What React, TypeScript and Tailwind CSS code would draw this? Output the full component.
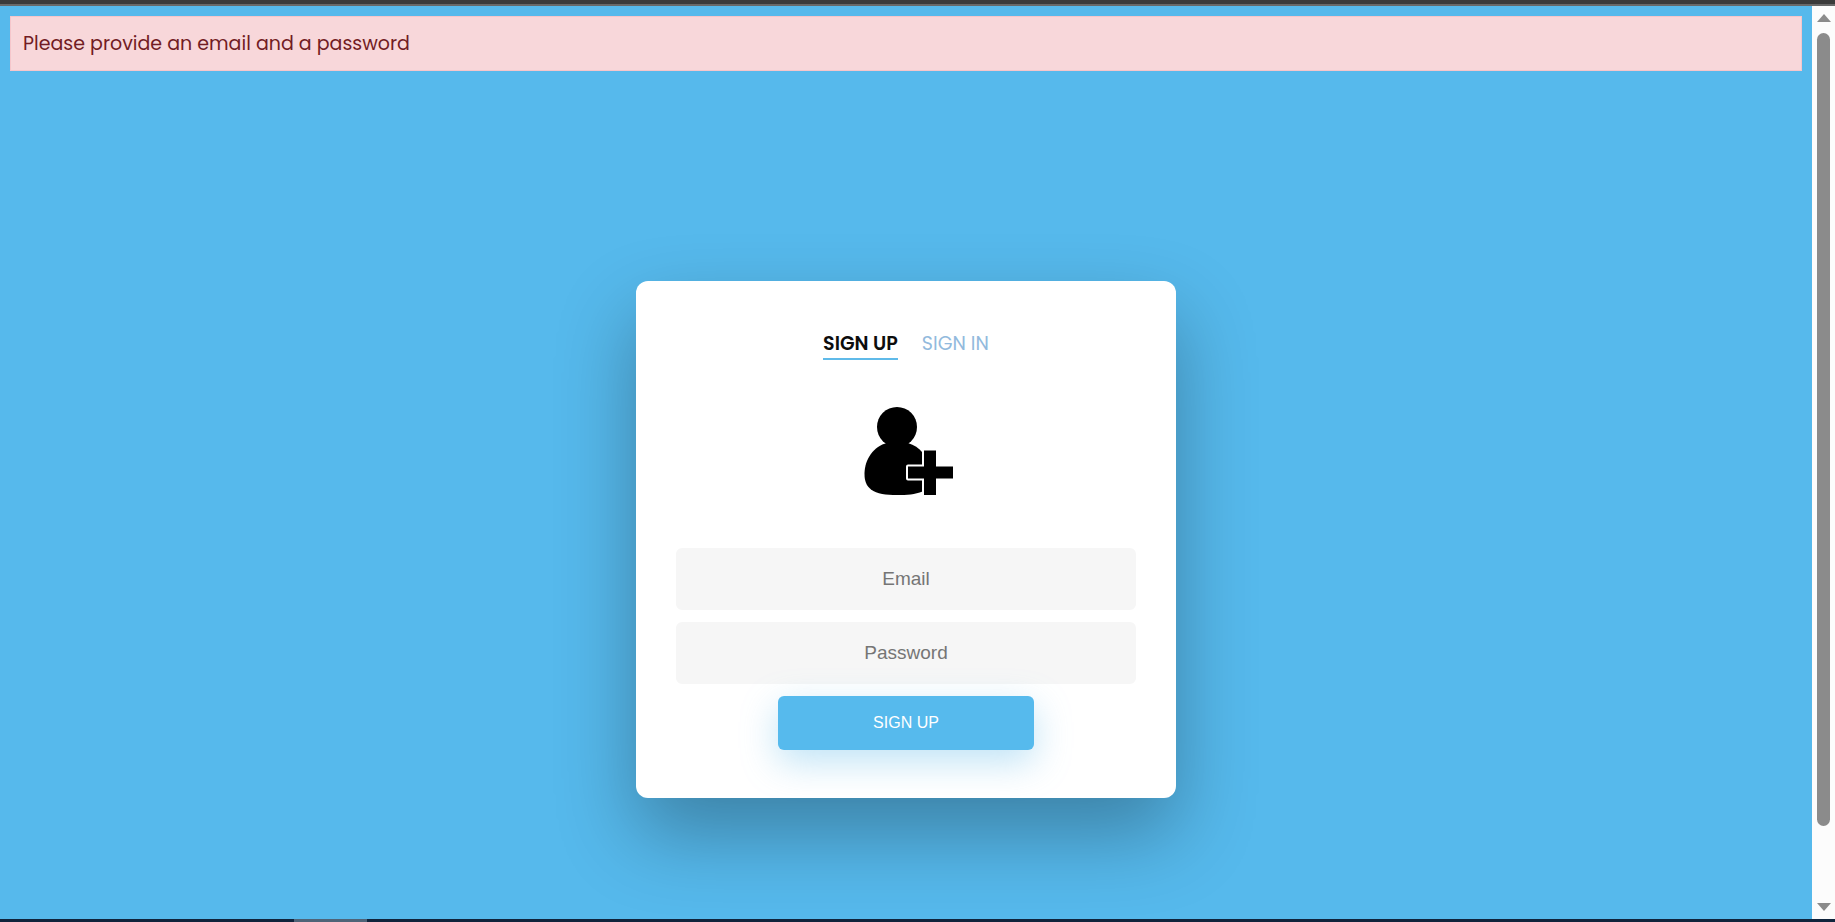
import { useState } from "react";

const field =
  "h-[62px] w-full rounded-md border-2 border-[#f6f6f6] bg-[#f6f6f6] px-8 text-center font-['Arial','Liberation_Sans',sans-serif] text-[19px] text-[#0d0d0d] outline-none placeholder:text-[#757575] placeholder:opacity-100";

function UserPlusIcon() {
  return (
    <svg className="h-[92px] w-[92px]" viewBox="0 0 92 92" aria-hidden="true">
      <circle cx="34" cy="21" r="20" fill="#000" />
      <path
        d="M24 37 H45 C51 39 56 42 59.500 46.500 V85.500 C52 88.500 44 89 34 89 C23 89 14 88 8 83.500 C3.500 80 1.500 75 1.500 68 C1.500 53 11 40 24 37 Z"
        fill="#000"
      />
      <path
        d="M61 44.500 H73 V60.500 H90 V72.500 H73 V89 H61 V72.500 H45 V60.500 H61 Z"
        fill="#000"
        stroke="#fff"
        strokeWidth="4"
        strokeLinejoin="round"
        paintOrder="stroke"
      />
    </svg>
  );
}

function ScrollRail() {
  return (
    <div className="flex w-[23px] shrink-0 flex-col items-center bg-[#fcfcfc] py-2" aria-hidden="true">
      <svg className="h-2 w-3.5" viewBox="0 0 14 8">
        <path d="M7 0 L14 8 H0 Z" fill="#8b8b8b" />
      </svg>
      <div className="mt-[11px] mb-[77px] w-[13px] flex-1 rounded-full bg-[#8b8b8b]" />
      <svg className="h-2 w-3.5" viewBox="0 0 14 8">
        <path d="M0 0 H14 L7 8 Z" fill="#8b8b8b" />
      </svg>
    </div>
  );
}

export default function App() {
  const [email, setEmail] = useState("");
  const [password, setPassword] = useState("");

  return (
    <div className="flex min-h-screen flex-col bg-[#56b9ec] font-['Poppins','Inter',sans-serif]">
      <div className="h-1.5 border-b-2 border-[#696969] bg-[#3b3b3b]" />
      <div className="flex flex-1">
        <main className="flex min-w-0 flex-1 flex-col p-2.5">
          <div
            role="alert"
            className="border border-[#f5c6cb] bg-[#f8d7da] px-3 py-3 text-[19px] leading-[29px] text-[#721c24]"
          >
            Please provide an email and a password
          </div>
          <div className="mt-[210px] flex justify-center">
            <div className="flex w-[540px] max-w-full flex-col items-center rounded-xl bg-white px-10 pt-[49px] pb-12 shadow-[0_36px_80px_0_rgba(0,0,0,0.3)]">
              <nav className="flex gap-6 text-[19px] leading-7">
                <a href="#signup" className="border-b-2 border-[#5fbae9] font-semibold text-[#0d0d0d]">
                  SIGN UP
                </a>
                <a href="#signin" className="border-b-2 border-transparent text-[#92badd]">
                  SIGN IN
                </a>
              </nav>
              <div className="mt-[46px] mb-[50px] pl-1.5">
                <UserPlusIcon />
              </div>
              <form
                className="flex w-full flex-col items-center gap-3"
                onSubmit={(e) => e.preventDefault()}
              >
                <input
                  type="email"
                  aria-label="Email"
                  placeholder="Email"
                  value={email}
                  onChange={(e) => setEmail(e.target.value)}
                  className={field}
                />
                <input
                  type="password"
                  aria-label="Password"
                  placeholder="Password"
                  value={password}
                  onChange={(e) => setPassword(e.target.value)}
                  className={field}
                />
                <button
                  type="submit"
                  className="h-[54px] w-64 rounded-md bg-[#56baed] font-['Arial','Liberation_Sans',sans-serif] text-[16px] text-white shadow-[0_12px_36px_0_rgba(95,186,233,0.4)]"
                >
                  SIGN UP
                </button>
              </form>
            </div>
          </div>
        </main>
        <ScrollRail />
      </div>
      <div className="flex h-[3px] bg-[#10243c]">
        <div className="ml-[16%] w-[73px] bg-[#4f6478]" />
      </div>
    </div>
  );
}
